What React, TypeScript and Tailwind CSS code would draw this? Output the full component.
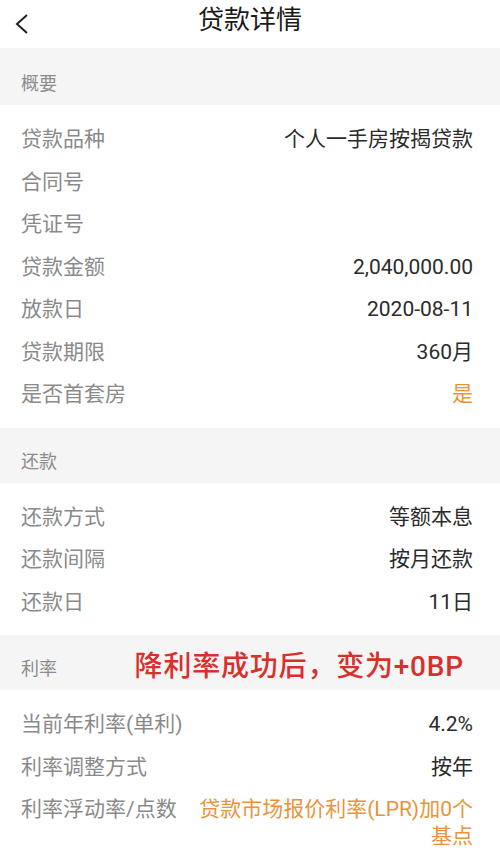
import React from "react";

const font = { fontFamily: '"Roboto", "Noto Sans CJK SC", sans-serif' };

type Row = { label: string; value?: string; orange?: boolean };

const overview: Row[] = [
  { label: "贷款品种", value: "个人一手房按揭贷款" },
  { label: "合同号" },
  { label: "凭证号" },
  { label: "贷款金额", value: "2,040,000.00" },
  { label: "放款日", value: "2020-08-11" },
  { label: "贷款期限", value: "360月" },
  { label: "是否首套房", value: "是", orange: true },
];

const repay: Row[] = [
  { label: "还款方式", value: "等额本息" },
  { label: "还款间隔", value: "按月还款" },
  { label: "还款日", value: "11日" },
];

const rate: Row[] = [
  { label: "当前年利率(单利)", value: "4.2%" },
  { label: "利率调整方式", value: "按年" },
  { label: "利率浮动率/点数", value: "贷款市场报价利率(LPR)加0个\n基点", orange: true },
];

const SectionHead = ({ title, note, tall }: { title: string; note?: string; tall?: boolean }) => (
  <div
    className={`flex items-end justify-between bg-[#f5f5f5] pl-[21px] pr-[36px] pb-[10px] ${
      tall ? "h-[57px]" : "h-[55px]"
    }`}
  >
    <span className="text-[18px] leading-[22px] text-[#8c8c8c]">{title}</span>
    {note && (
      <span className="text-[28px] leading-[30px] font-medium tracking-[0.8px] text-[#d8302c] -mb-[2px]">
        {note}
      </span>
    )}
  </div>
);

const Rows = ({ rows }: { rows: Row[] }) => (
  <div className="bg-white pt-[13px] pb-[12px]">
    {rows.map((r, i) => (
      <div
        key={i}
        className="flex justify-between items-start pl-[21px] pr-[27px] py-[8px] text-[21px] leading-[26.5px]"
      >
        <span className="shrink-0 text-[#8a8a8a]">{r.label}</span>
        <span
          className={`ml-[20px] text-right whitespace-pre-line ${
            r.orange ? "text-[#e8943a]" : "text-[#2b2b2b]"
          }`}
        >
          {r.value}
        </span>
      </div>
    ))}
  </div>
);

export default function App() {
  return (
    <div style={font} className="w-[500px] h-[850px] overflow-hidden bg-white">
      <div className="relative flex items-center justify-center h-[48px] bg-white">
        <svg className="absolute left-[13px] top-[13px]" width="18" height="22" viewBox="0 0 18 22">
          <path d="M14 2 L4 11 L14 20" fill="none" stroke="#222" strokeWidth="2" />
        </svg>
        <span className="text-[26px] text-[#1a1a1a] -mt-[8px]">贷款详情</span>
      </div>
      <SectionHead title="概要" tall />
      <Rows rows={overview} />
      <SectionHead title="还款" />
      <Rows rows={repay} />
      <SectionHead title="利率" note="降利率成功后，变为+0BP" />
      <Rows rows={rate} />
    </div>
  );
}
